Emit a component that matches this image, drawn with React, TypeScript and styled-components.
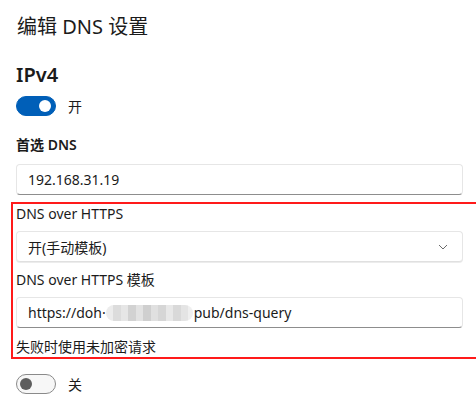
import React from 'react';
import styled, { createGlobalStyle } from 'styled-components';

const GlobalStyle = createGlobalStyle`
  html, body {
    margin: 0;
    padding: 0;
    background: #ffffff;
    overflow: hidden;
  }
  body {
    font-family: "Segoe UI", "Noto Sans", "Noto Sans CJK SC", sans-serif;
    color: #1b1b1b;
  }
`;

const Page = styled.div`
  width: 476px;
  height: 418px;
  box-sizing: border-box;
  padding: 13px 13px 0 16px;
  display: flex;
  flex-direction: column;
`;

const Title = styled.h1`
  margin: 0 0 20px 1px;
  font-size: 20px;
  line-height: 28px;
  font-weight: 400;
`;

const SectionTitle = styled.h2`
  margin: 0 0 7px 0;
  font-size: 20px;
  line-height: 28px;
  font-weight: 600;
`;

const ToggleRow = styled.div<{ $gap?: number }>`
  display: flex;
  align-items: center;
  gap: 12px;
  height: 20px;
  margin-bottom: ${(p) => p.$gap ?? 0}px;
  font-size: 14px;
`;

const Track = styled.span<{ $on: boolean }>`
  position: relative;
  display: inline-block;
  width: 40px;
  height: 20px;
  box-sizing: border-box;
  border-radius: 10px;
  background: ${(p) => (p.$on ? '#005fb8' : '#f7f7f7')};
  border: 1px solid ${(p) => (p.$on ? '#005fb8' : '#8a8a8a')};
`;

const Knob = styled.span<{ $on: boolean }>`
  position: absolute;
  top: 3px;
  left: ${(p) => (p.$on ? '22px' : '3px')};
  width: 12px;
  height: 12px;
  border-radius: 50%;
  background: ${(p) => (p.$on ? '#ffffff' : '#5d5d5d')};
`;

const Label = styled.div<{ $bold?: boolean; $gap?: number }>`
  font-size: 14px;
  line-height: 20px;
  font-weight: ${(p) => (p.$bold ? 600 : 400)};
  margin-bottom: ${(p) => p.$gap ?? 0}px;
`;

const Field = styled.div<{ $gap?: number }>`
  display: flex;
  align-items: center;
  height: 31px;
  box-sizing: border-box;
  padding: 0 12px 0 11px;
  border: 1px solid #e6e6e6;
  border-bottom-color: #8d8d8d;
  border-radius: 4px;
  background: #ffffff;
  font-size: 14px;
  margin-bottom: ${(p) => p.$gap ?? 0}px;
`;

const Select = styled(Field)`
  justify-content: space-between;
  border-bottom-color: #e0e0e0;
  box-shadow: 0 1px 0 #ececec;
`;

const Highlight = styled.section`
  margin: 7px -15px 15px -5px;
  padding: 0 13px 0 3px;
  border: 2px solid #ff1a1a;
`;

const Blur = styled.span`
  display: inline-flex;
  height: 16px;
  margin: 0 1px 0 0;
  border-radius: 8px;
  overflow: hidden;
`;

const Cell = styled.span<{ $c: string; $w: number }>`
  width: ${(p) => p.$w}px;
  height: 100%;
  background: ${(p) => p.$c};
`;

const Toggle = ({ on }: { on: boolean }) => (
  <Track $on={on}>
    <Knob $on={on} />
  </Track>
);

const Chevron = () => (
  <svg width="10" height="6" viewBox="0 0 10 6" style={{ marginRight: 2 }}>
    <path d="M1 1 L5 5 L9 1" fill="none" stroke="#6b6b6b" strokeWidth="1" />
  </svg>
);

const blurCells = [
  ['#ececec', 7],
  ['#dcdcdc', 8],
  ['#e6e6e6', 7],
  ['#d2d2d2', 8],
  ['#e2e2e2', 7],
  ['#cfcfcf', 8],
  ['#e0e0e0', 7],
  ['#d6d6d6', 8],
  ['#e8e8e8', 7],
  ['#d9d9d9', 8],
  ['#e4e4e4', 7],
  ['#efefef', 5],
] as const;

export default function App() {
  return (
    <>
      <GlobalStyle />
      <Page>
        <Title>编辑 DNS 设置</Title>
        <SectionTitle>IPv4</SectionTitle>
        <ToggleRow $gap={19}>
          <Toggle on />
          <span>开</span>
        </ToggleRow>
        <Label $bold $gap={9}>首选 DNS</Label>
        <Field>192.168.31.19</Field>
        <Highlight>
          <Label $gap={7}>DNS over HTTPS</Label>
          <Select $gap={8}>
            <span>开(手动模板)</span>
            <Chevron />
          </Select>
          <Label $gap={7}>DNS over HTTPS 模板</Label>
          <Field $gap={9}>
            https://doh·
            <Blur>
              {blurCells.map(([c, w], i) => (
                <Cell key={i} $c={c} $w={w} />
              ))}
            </Blur>
            pub/dns-query
          </Field>
          <Label>失败时使用未加密请求</Label>
        </Highlight>
        <ToggleRow>
          <Toggle on={false} />
          <span>关</span>
        </ToggleRow>
      </Page>
    </>
  );
}
